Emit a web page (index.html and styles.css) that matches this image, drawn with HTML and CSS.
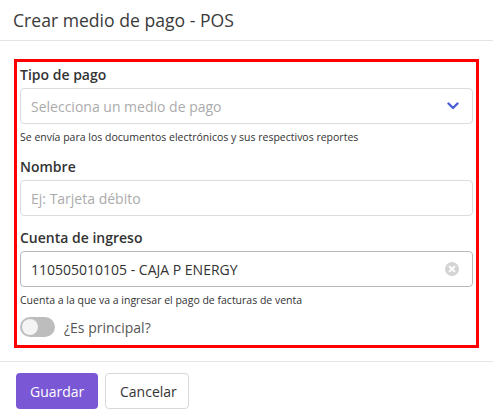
FILE: index.html
```html
<!DOCTYPE html>
<html lang="es">
<head>
    <meta charset="UTF-8">
    <meta name="viewport" content="width=device-width, initial-scale=1.0">
    <title>Crear medio de pago - POS</title>
    <link rel="stylesheet" href="styles.css">
</head>
<body>
    <div class="modal">
        <header class="modal-header">
            <h1>Crear medio de pago - POS</h1>
        </header>

        <div class="modal-body">
            <div class="highlight">
                <div class="field">
                    <label>Tipo de pago</label>
                    <div class="control">
                        <span class="placeholder">Selecciona un medio de pago</span>
                        <svg class="chevron" width="12" height="8" viewBox="0 0 12 8">
                            <path d="M1.5 1.5 L6 6 L10.5 1.5" fill="none" stroke="#4c5fd5" stroke-width="2.4" stroke-linecap="round" stroke-linejoin="round"/>
                        </svg>
                    </div>
                    <p class="help">Se envía para los documentos electrónicos y sus respectivos reportes</p>
                </div>

                <div class="field">
                    <label>Nombre</label>
                    <div class="control">
                        <span class="placeholder">Ej: Tarjeta débito</span>
                    </div>
                </div>

                <div class="field field-last">
                    <label>Cuenta de ingreso</label>
                    <div class="control control-filled">
                        <span class="value">110505010105 - CAJA P ENERGY</span>
                        <svg class="clear" width="14" height="14" viewBox="0 0 14 14">
                            <circle cx="7" cy="7" r="7" fill="#d4d4d4"/>
                            <path d="M4.6 4.6 L9.4 9.4 M9.4 4.6 L4.6 9.4" stroke="#fff" stroke-width="2" stroke-linecap="round"/>
                        </svg>
                    </div>
                    <p class="help">Cuenta a la que va a ingresar el pago de facturas de venta</p>
                </div>

                <div class="switch-row">
                    <span class="switch"><span class="knob"></span></span>
                    <span class="switch-label">¿Es principal?</span>
                </div>
            </div>
        </div>

        <footer class="modal-footer">
            <button class="btn btn-primary">Guardar</button>
            <button class="btn btn-default">Cancelar</button>
        </footer>
    </div>
</body>
</html>
```

FILE: styles.css
```css
body {
    margin: 0;
    font-family: "Open Sans", "Noto Sans", sans-serif;
    background-color: #fff;
    color: #333;
}

.modal {
    width: 493px;
}

.modal-header {
    height: 40px;
    border-bottom: 1px solid #e3e3e3;
    padding: 0 13px;
    display: flex;
    align-items: center;
}

.modal-header h1 {
    margin: 0;
    font-size: 17.6px;
    font-weight: 400;
    color: #3a3a3a;
}

.modal-body {
    padding: 18px 14px 13px;
}

.highlight {
    border: 3px solid #ff0000;
    padding: 3px 3px 8px;
}

.field {
    margin-bottom: 12px;
}

.field-last {
    margin-bottom: 9px;
}

.field label {
    display: block;
    font-size: 14px;
    font-weight: 600;
    line-height: 20px;
    color: #333;
    margin-bottom: 3px;
}

.control {
    height: 34px;
    border: 1px solid #dcdcdc;
    border-radius: 4px;
    display: flex;
    align-items: center;
    justify-content: space-between;
    padding: 0 13px 0 10px;
}

.control-filled {
    border-color: #b9b9b9;
}

.placeholder {
    font-size: 14px;
    color: #ababab;
}

.value {
    font-size: 14px;
    color: #333;
}

.help {
    margin: 5px 0 0;
    font-size: 10.5px;
    line-height: 16px;
    color: #333;
}

.switch-row {
    display: flex;
    align-items: center;
    gap: 9px;
}

.switch {
    width: 35px;
    height: 20px;
    border-radius: 10px;
    background-color: #bdbdbd;
    display: flex;
    align-items: center;
    padding-left: 2px;
    box-sizing: border-box;
}

.knob {
    width: 16px;
    height: 16px;
    border-radius: 50%;
    background-color: #f4f4f4;
}

.switch-label {
    font-size: 14px;
    color: #555;
}

.modal-footer {
    border-top: 1px solid #e6e6e6;
    padding: 11px 16px;
    display: flex;
    gap: 7px;
}

.btn {
    height: 36px;
    border-radius: 4px;
    font-family: inherit;
    font-size: 14px;
    padding: 0 14px;
    cursor: pointer;
}

.btn-primary {
    width: 82px;
    background-color: #7a57d5;
    border: none;
    color: #fff;
}

.btn-default {
    width: 84px;
    background-color: #fff;
    border: 1px solid #d8d8d8;
    color: #333;
}
```
